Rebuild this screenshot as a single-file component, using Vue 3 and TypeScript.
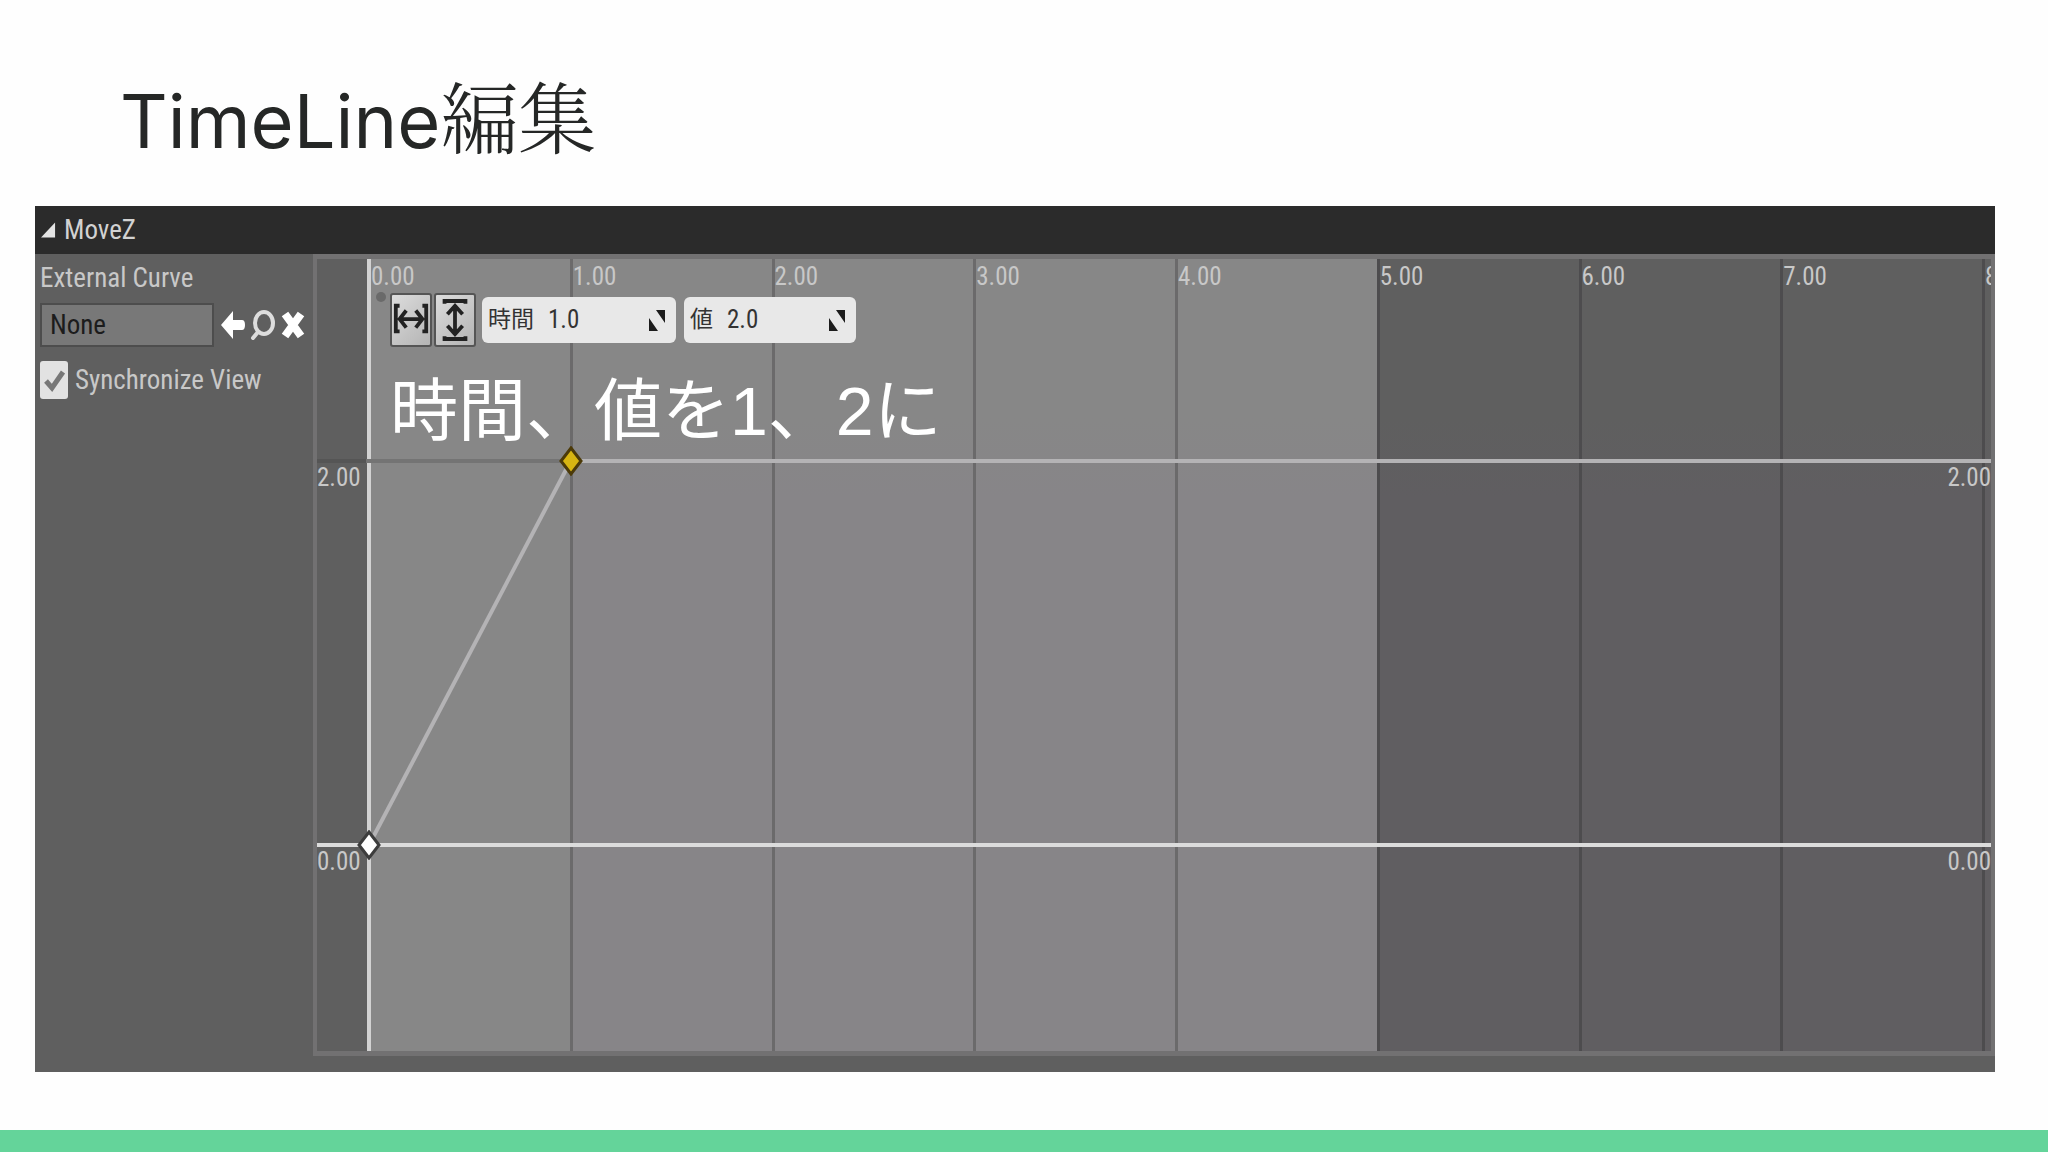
<script setup lang="ts">
import { ref } from 'vue'

interface Field {
  id: string
  label: string
  value: string
}

const ticks = ['0.00', '1.00', '2.00', '3.00', '4.00', '5.00', '6.00', '7.00']
const activeColumns = 5
const levels = [
  { label: '2.00', kind: 'upper' },
  { label: '0.00', kind: 'zero' },
]
const fields = ref<Field[]>([
  { id: 'time', label: '時間', value: '1.0' },
  { id: 'value', label: '値', value: '2.0' },
])
const asset = ref('None')
const synced = ref(true)
</script>

<template>
  <main class="slide">
    <h1 class="title">TimeLine<span>編集</span></h1>

    <section class="panel">
      <header class="panel-head">
        <svg class="fold" viewBox="0 0 16 18" aria-hidden="true"><path d="M15 1V17H0Z" /></svg>
        <h2>MoveZ</h2>
      </header>

      <div class="panel-body">
        <aside class="side">
          <label class="side-label" for="asset">External Curve</label>
          <div class="asset-row">
            <input id="asset" v-model="asset" class="asset" type="text" />
            <button class="icon" type="button" aria-label="Use selected">
              <svg viewBox="0 0 26 32"><path d="M1 16 13 2V11H22Q25 11 25 16T22 21H13V30Z" /></svg>
            </button>
            <button class="icon" type="button" aria-label="Browse">
              <svg viewBox="0 0 26 32">
                <ellipse class="stroke" cx="14" cy="14" rx="9" ry="11" />
                <path class="stroke" d="M8 23 3 29" />
              </svg>
            </button>
            <button class="icon" type="button" aria-label="Clear">
              <svg viewBox="0 0 26 32"><path class="cross" d="M5 5 21 27M21 5 5 27" /></svg>
            </button>
          </div>
          <label class="sync">
            <input v-model="synced" type="checkbox" />
            <svg class="tick" viewBox="0 0 28 36" aria-hidden="true"><path d="M6 19 12 26 23 10" /></svg>
            <span>Synchronize View</span>
          </label>
        </aside>

        <div class="plot">
          <div class="grid">
            <div class="gutter"></div>
            <div
              v-for="(tick, i) in ticks"
              :key="tick"
              class="column"
              :class="{ active: i < activeColumns, origin: i === 0 }"
            >
              {{ tick }}
            </div>
            <div class="column stub">8.00</div>
          </div>

          <div v-for="level in levels" :key="level.kind" class="level" :class="level.kind">
            <span>{{ level.label }}</span>
            <span>{{ level.label }}</span>
          </div>

          <div class="curve">
            <svg class="lines" aria-hidden="true">
              <line x1="0" y1="74%" x2="12.5%" y2="25.5%" />
              <line x1="12.5%" y1="25.5%" x2="100%" y2="25.5%" />
            </svg>
            <svg class="key start" viewBox="0 0 24 30" aria-hidden="true"><path d="M12 2 22 15 12 28 2 15Z" /></svg>
            <svg class="key end" viewBox="0 0 24 30" aria-hidden="true"><path d="M12 2 22 15 12 28 2 15Z" /></svg>
            <i class="dot"></i>
          </div>

          <div class="overlay">
            <div class="tools">
              <button class="fit" type="button" aria-label="Fit horizontally">
                <svg viewBox="0 0 40 52">
                  <path d="M8 11H4V38H8M32 11H36V38H32M8 25H32M15 16 8 25 15 34M25 16 32 25 25 34" />
                </svg>
              </button>
              <button class="fit" type="button" aria-label="Fit vertically">
                <svg viewBox="0 0 40 52">
                  <path d="M9 9V6H31V9M9 43V46H31V43M20 12V40M12 20 20 11 28 20M12 32 20 41 28 32" />
                </svg>
              </button>
              <label v-for="field in fields" :key="field.id" class="field" :class="field.id">
                <span>{{ field.label }}</span>
                <input v-model="field.value" type="text" />
                <svg viewBox="0 0 18 24" aria-hidden="true"><path d="M8 2H17V15ZM1 10 10 23H1Z" /></svg>
              </label>
            </div>
            <p class="note">時間、値を1、2に</p>
          </div>
        </div>
      </div>
    </section>

    <footer class="stripe"></footer>
  </main>
</template>

<style>
body {
  margin: 0;
  background: #fefefe;
}
</style>

<style scoped>
* {
  box-sizing: border-box;
}
.slide {
  display: flex;
  flex-direction: column;
  min-height: 100vh;
  color: #c8c8c8;
  font: 27px/32px 'Roboto Condensed', 'Liberation Sans Narrow', Roboto, 'Noto Sans CJK JP', sans-serif;
}
.title {
  margin: 0;
  padding: 71px 120px 35px;
  color: #252726;
  font: 400 74px/100px Inter, 'Open Sans', sans-serif;
}
.title span {
  font-family: 'Noto Serif CJK JP', 'Noto Sans CJK JP', serif;
  font-size: 78px;
  font-weight: 300;
  line-height: 1px;
}
.panel {
  display: flex;
  flex: 1;
  flex-direction: column;
  margin: 0 53px 58px 35px;
  background: #5f5f5f;
}
.panel-head {
  display: flex;
  align-items: center;
  gap: 8px;
  height: 48px;
  padding: 0 6px;
  background: #2b2b2b;
}
.panel-head h2 {
  margin: 0;
  color: #d2d2d2;
  font: inherit;
}
.fold {
  width: 15px;
  height: 18px;
  fill: #e4e4e4;
}
.panel-body {
  display: flex;
  flex: 1;
}
.side {
  display: flex;
  flex-direction: column;
  width: 278px;
  padding: 8px 5px;
}
.asset-row {
  display: flex;
  align-items: center;
  gap: 4px;
  margin-top: 9px;
}
.asset {
  width: 174px;
  height: 44px;
  margin-right: 2px;
  padding: 0 8px;
  border: 2px solid #4d4d4d;
  background: #787878;
  color: #1c1c1c;
  font: inherit;
}
.icon {
  width: 26px;
  height: 32px;
  padding: 0;
  border: 0;
  background: none;
  fill: #fff;
}
.icon svg {
  display: block;
}
.stroke {
  fill: none;
  stroke: #ddd;
  stroke-width: 4;
  stroke-linecap: round;
}
.cross {
  fill: none;
  stroke: #fff;
  stroke-width: 8;
}
.sync {
  position: relative;
  display: flex;
  align-items: center;
  gap: 7px;
  margin-top: 14px;
}
.sync input {
  appearance: none;
  width: 28px;
  height: 38px;
  margin: 0;
  border-radius: 3px;
  background: #e2e2e2;
}
.tick {
  position: absolute;
  left: 0;
  width: 28px;
  height: 36px;
  fill: none;
  stroke: #777;
  stroke-width: 5;
}
.sync input:not(:checked) + .tick {
  display: none;
}
.plot {
  position: relative;
  flex: 1;
  margin-bottom: 16px;
  border: 4px solid #727172;
  border-top-width: 5px;
  border-bottom-width: 5px;
  font-size: 25px;
}
.grid {
  position: absolute;
  inset: 0;
  display: flex;
  background: linear-gradient(#5f5f5f 20%, #605e61 30%);
}
.gutter {
  width: 50px;
  background: #5f5f5f;
}
.column {
  flex: 1;
  padding-top: 2px;
  border-left: 3px solid #4d4c4e;
}
.column.active {
  border-color: #6b6a6b;
  background: linear-gradient(#878787 20%, #878588 30%);
}
.column.origin {
  border-left: 4px solid #d2d2d2;
  background: #878787;
}
.column.stub {
  flex: none;
  width: 9px;
  overflow: hidden;
}
.level {
  position: absolute;
  right: 0;
  left: 0;
  display: flex;
  justify-content: space-between;
  border-top: 4px solid #dcdcdc;
  line-height: 30px;
}
.level.zero {
  top: 73.7%;
}
.level.upper {
  top: 25.3%;
  border-color: #b4b3b5;
  border-image: linear-gradient(90deg, #555 50px, #747474 50px 252px, #b4b3b5 252px) 1;
}
.curve {
  position: absolute;
  inset: 0 9px 0 52px;
}
.lines {
  width: 100%;
  height: 100%;
  stroke: #b4b3b5;
  stroke-width: 4;
}
.key {
  position: absolute;
  width: 24px;
  height: 30px;
  margin: -15px -12px;
  fill: #fff;
  stroke: #3c3c3c;
  stroke-width: 3;
}
.key.start {
  top: 74%;
  left: 0;
}
.key.end {
  top: 25.5%;
  left: 12.5%;
  fill: #d8b512;
  stroke: #4c3a08;
}
.dot {
  position: absolute;
  top: 33px;
  left: 7px;
  width: 10px;
  height: 10px;
  border-radius: 50%;
  background: #6a6a6a;
}
.overlay {
  position: absolute;
  top: 34px;
  left: 73px;
}
.tools {
  display: flex;
  align-items: center;
  gap: 2px;
  color: #333;
}
.fit {
  width: 42px;
  height: 54px;
  padding: 0;
  border: 2px solid #555;
  border-radius: 3px;
  background: linear-gradient(135deg, #dcdcdc, #b4b4b4);
}
.fit svg {
  display: block;
  width: 38px;
  height: 50px;
  fill: none;
  stroke: #222;
  stroke-width: 4;
}
.field {
  display: flex;
  align-items: center;
  gap: 14px;
  width: 194px;
  height: 46px;
  margin-left: 4px;
  padding: 0 10px 0 6px;
  border-radius: 6px;
  background: #e8e8e8;
  font-size: 23px;
}
.field.value {
  width: 172px;
  margin-left: 6px;
}
.field input {
  flex: 1;
  min-width: 0;
  padding: 0;
  border: 0;
  background: none;
  color: #333;
  font: inherit;
  font-size: 25px;
}
.field svg {
  width: 18px;
  height: 24px;
  fill: #1c1c1c;
}
.note {
  margin: 14px 0 0;
  color: #fff;
  font: 400 68px/100px 'Liberation Sans', 'Noto Sans CJK JP', sans-serif;
  white-space: nowrap;
}
.stripe {
  height: 22px;
  background: #64d49a;
}
</style>
